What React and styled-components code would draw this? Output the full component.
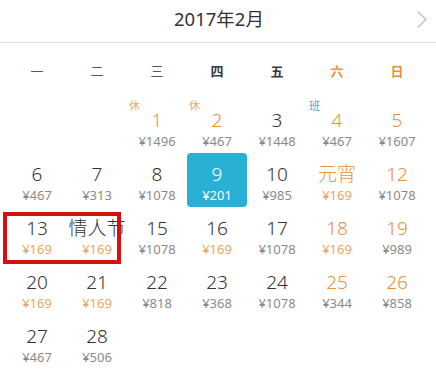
import React from 'react';
import styled, { createGlobalStyle } from 'styled-components';

const GlobalStyle = createGlobalStyle`
  body {
    margin: 0;
    background: #ffffff;
    font-family: "Noto Sans", "Noto Sans CJK SC", sans-serif;
  }
`;

const ORANGE = '#e8913a';
const ORANGE_PRICE = '#eba55e';
const GRAY_PRICE = '#8a8a8a';
const DARK = '#333333';

const Page = styled.div`
  width: 436px;
  height: 370px;
  overflow: hidden;
  background: #fff;
`;

const Header = styled.div`
  position: relative;
  height: 42px;
  display: flex;
  align-items: center;
  justify-content: center;
  border-bottom: 1px solid #e2e2e2;
`;

const Title = styled.div`
  font-size: 18.5px;
  color: ${DARK};
  padding-left: 2px;
  margin-top: -6px;
`;

const NextButton = styled.div`
  position: absolute;
  right: 8px;
  top: 10px;
  width: 12px;
  height: 19px;
  display: flex;
`;

const Calendar = styled.div`
  position: relative;
  width: 420px;
  padding-left: 7px;
  display: grid;
  grid-template-columns: repeat(7, 60px);
`;

const WeekDay = styled.div`
  height: 55px;
  display: flex;
  align-items: center;
  justify-content: center;
  font-size: 13px;
  font-weight: ${(p) => (p.$bold ? 700 : 400)};
  color: ${(p) => (p.$weekend ? ORANGE : p.$bold ? '#3a3a3a' : '#555')};
  padding-bottom: 1px;
`;

const Cell = styled.div`
  position: relative;
  height: 54px;
  display: flex;
  flex-direction: column;
  align-items: center;
  padding-top: 11px;
  box-sizing: border-box;
  border-radius: 4px;
  background: ${(p) => (p.$selected ? '#29b0d5' : 'transparent')};
`;

const Day = styled.div`
  font-size: 19px;
  line-height: 21px;
  font-weight: 300;
  color: ${(p) => (p.$selected ? '#fff' : p.$orange ? ORANGE : DARK)};
`;

const Price = styled.div`
  margin-top: 2px;
  font-size: 13px;
  line-height: 17px;
  color: ${(p) => (p.$selected ? '#fff' : p.$orange ? ORANGE_PRICE : GRAY_PRICE)};
`;

const Tag = styled.div`
  position: absolute;
  left: 2px;
  top: 0;
  font-size: 11px;
  line-height: 13px;
  color: ${(p) => (p.$work ? '#4aa6c8' : '#e9ab68')};
`;

const Mark = styled.div`
  position: absolute;
  left: 3px;
  top: 169px;
  width: 118px;
  height: 52px;
  box-sizing: border-box;
  border: 4px solid #d60f0f;
  pointer-events: none;
`;

const weekDays = [
  { t: '一' },
  { t: '二' },
  { t: '三' },
  { t: '四', bold: true },
  { t: '五', bold: true },
  { t: '六', bold: true, weekend: true },
  { t: '日', bold: true, weekend: true },
];

// o: orange day, po: orange price
const days = [
  null,
  null,
  { d: '1', p: '1496', o: true, tag: '休' },
  { d: '2', p: '467', o: true, tag: '休' },
  { d: '3', p: '1448' },
  { d: '4', p: '467', o: true, tag: '班', work: true },
  { d: '5', p: '1607', o: true },
  { d: '6', p: '467' },
  { d: '7', p: '313' },
  { d: '8', p: '1078' },
  { d: '9', p: '201', sel: true },
  { d: '10', p: '985' },
  { d: '元宵', p: '169', o: true, po: true },
  { d: '12', p: '1078', o: true },
  { d: '13', p: '169', po: true },
  { d: '情人节', p: '169', po: true },
  { d: '15', p: '1078' },
  { d: '16', p: '169', po: true },
  { d: '17', p: '1078' },
  { d: '18', p: '169', o: true, po: true },
  { d: '19', p: '989', o: true },
  { d: '20', p: '169', po: true },
  { d: '21', p: '169', po: true },
  { d: '22', p: '818' },
  { d: '23', p: '368' },
  { d: '24', p: '1078' },
  { d: '25', p: '344', o: true },
  { d: '26', p: '858', o: true },
  { d: '27', p: '467' },
  { d: '28', p: '506' },
];

export default function App() {
  return (
    <Page>
      <GlobalStyle />
      <Header>
        <Title>2017年2月</Title>
        <NextButton>
          <svg width="12" height="19" viewBox="0 0 12 19">
            <polyline points="1.5,1.5 10,9.5 1.5,17.5" fill="none" stroke="#c4c4c4" strokeWidth="1.6" />
          </svg>
        </NextButton>
      </Header>
      <Calendar>
        {weekDays.map((w) => (
          <WeekDay key={w.t} $bold={w.bold} $weekend={w.weekend}>
            {w.t}
          </WeekDay>
        ))}
        {days.map((c, i) =>
          c ? (
            <Cell key={i} $selected={c.sel}>
              {c.tag && <Tag $work={c.work}>{c.tag}</Tag>}
              <Day $orange={c.o} $selected={c.sel}>{c.d}</Day>
              <Price $orange={c.po} $selected={c.sel}>¥{c.p}</Price>
            </Cell>
          ) : (
            <Cell key={i} />
          )
        )}
        <Mark />
      </Calendar>
    </Page>
  );
}
